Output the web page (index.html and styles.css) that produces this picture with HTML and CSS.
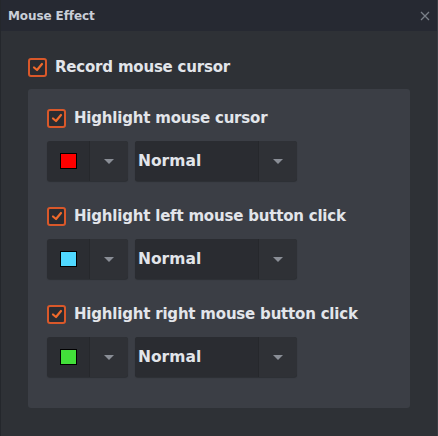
FILE: index.html
```html
<html>
<head>
<meta name="viewport" content="width=device-width, initial-scale=1">
<link rel="stylesheet" href="styles.css">
</head>
<body>
<div class="window">
  <div class="titlebar">
    <span class="title">Mouse Effect</span>
    <svg class="close" viewBox="0 0 10 10" width="10" height="10"><path d="M1 1 L9 9 M9 1 L1 9" stroke="#7a7f88" stroke-width="1.3"/></svg>
  </div>
  <div class="content">
    <label class="check-row">
      <span class="box"><svg viewBox="0 0 12 12" width="12" height="12"><path d="M2 6.5 L5 9 L10 3" fill="none" stroke="#f06a2c" stroke-width="2.2" stroke-linecap="round" stroke-linejoin="round"/></svg></span>
      <span class="label">Record mouse cursor</span>
    </label>

    <div class="panel">
      <div class="group">
        <label class="check-row">
          <span class="box"><svg viewBox="0 0 12 12" width="12" height="12"><path d="M2 6.5 L5 9 L10 3" fill="none" stroke="#f06a2c" stroke-width="2.2" stroke-linecap="round" stroke-linejoin="round"/></svg></span>
          <span class="label">Highlight mouse cursor</span>
        </label>
        <div class="controls">
          <div class="dropdown color-pick">
            <span class="main"><span class="swatch red"></span></span>
            <span class="arrow"></span>
          </div>
          <div class="dropdown mode">
            <span class="main">Normal</span>
            <span class="arrow"></span>
          </div>
        </div>
      </div>

      <div class="group">
        <label class="check-row">
          <span class="box"><svg viewBox="0 0 12 12" width="12" height="12"><path d="M2 6.5 L5 9 L10 3" fill="none" stroke="#f06a2c" stroke-width="2.2" stroke-linecap="round" stroke-linejoin="round"/></svg></span>
          <span class="label">Highlight left mouse button click</span>
        </label>
        <div class="controls">
          <div class="dropdown color-pick">
            <span class="main"><span class="swatch blue"></span></span>
            <span class="arrow"></span>
          </div>
          <div class="dropdown mode">
            <span class="main">Normal</span>
            <span class="arrow"></span>
          </div>
        </div>
      </div>

      <div class="group">
        <label class="check-row">
          <span class="box"><svg viewBox="0 0 12 12" width="12" height="12"><path d="M2 6.5 L5 9 L10 3" fill="none" stroke="#f06a2c" stroke-width="2.2" stroke-linecap="round" stroke-linejoin="round"/></svg></span>
          <span class="label">Highlight right mouse button click</span>
        </label>
        <div class="controls">
          <div class="dropdown color-pick">
            <span class="main"><span class="swatch green"></span></span>
            <span class="arrow"></span>
          </div>
          <div class="dropdown mode">
            <span class="main">Normal</span>
            <span class="arrow"></span>
          </div>
        </div>
      </div>
    </div>
  </div>
</div>
</body>
</html>
```

FILE: styles.css
```css
body {
  margin: 0;
  background: #2e3136;
  font-family: "DejaVu Sans", Verdana, sans-serif;
}
.window {
  width: 438px;
  height: 436px;
  display: flex;
  flex-direction: column;
  background: #2e3136;
  box-sizing: border-box;
  border-left: 1px solid #24272c;
  border-right: 1px solid #3a3d44;
}
.titlebar {
  height: 31px;
  flex: none;
  background: #262932;
  display: flex;
  align-items: center;
  justify-content: space-between;
  padding: 0 7px 0 7px;
}
.title {
  color: #c9ced8;
  font-size: 12px;
  font-weight: bold;
  letter-spacing: -0.1px;
}
.close {
  margin-top: 1px;
}
.content {
  padding: 26px 0 0 27px;
}
.check-row {
  display: flex;
  align-items: center;
  gap: 8px;
  height: 20px;
}
.box {
  width: 19px;
  height: 19px;
  box-sizing: border-box;
  border: 2px solid #d9582a;
  border-radius: 3px;
  background: #2a2c31;
  display: flex;
  align-items: center;
  justify-content: center;
}
.label {
  color: #e2e5ea;
  font-size: 15px;
  font-weight: bold;
  letter-spacing: -0.2px;
}
.panel {
  margin-top: 12px;
  width: 382px;
  height: 319px;
  box-sizing: border-box;
  background: #3b3e45;
  border-radius: 3px;
  padding: 19px 0 0 19px;
}
.group {
  margin-bottom: 25px;
}
.controls {
  margin-top: 13px;
  display: flex;
  gap: 7px;
}
.dropdown {
  height: 40px;
  display: flex;
  border-radius: 3px;
  background: #2b2d32;
  box-shadow: 0 1px 1px rgba(0, 0, 0, 0.25);
  overflow: hidden;
}
.dropdown .main {
  display: flex;
  align-items: center;
}
.dropdown .arrow {
  width: 39px;
  box-sizing: border-box;
  border-left: 1px solid #26282c;
  background: #2f3136;
  position: relative;
}
.dropdown .arrow::after {
  content: "";
  position: absolute;
  left: 14px;
  top: 18px;
  border-left: 5px solid transparent;
  border-right: 5px solid transparent;
  border-top: 5px solid #8a8e96;
}
.color-pick .main {
  width: 42px;
  justify-content: center;
}
.swatch {
  width: 15px;
  height: 14px;
  border: 1px solid #000;
}
.red { background: #ff0000; }
.blue { background: #4fd8ff; }
.green { background: #42e03a; }
.mode .main {
  width: 123px;
  box-sizing: border-box;
  padding-left: 3px;
  color: #e2e5ea;
  font-size: 15.5px;
  font-weight: bold;
  background: #2a2c31;
}
```
